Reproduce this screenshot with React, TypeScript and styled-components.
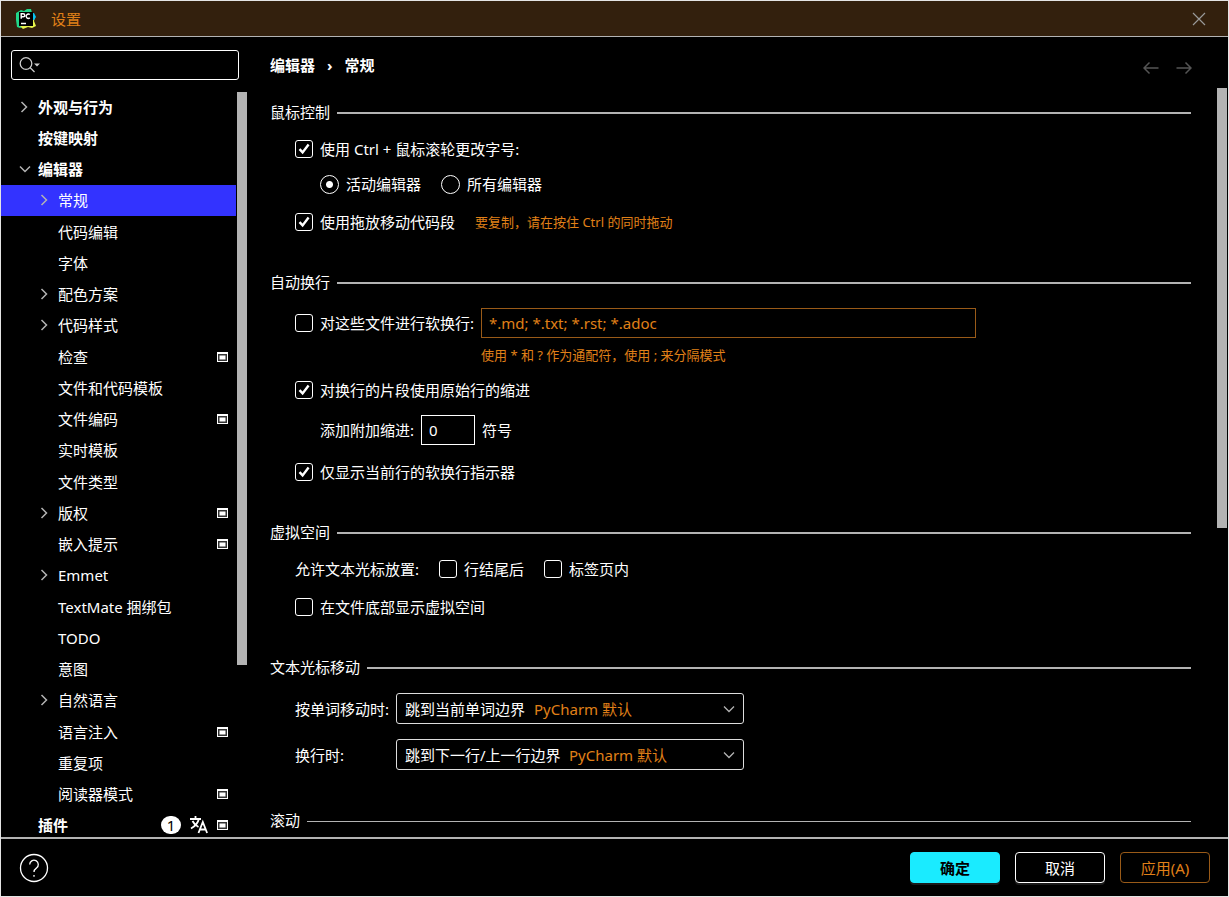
import React from "react";
import styled, { createGlobalStyle, css } from "styled-components";

const LINE = "#b3b3b3";
const ORANGE = "#e08018";

const Global = createGlobalStyle`
  *, *::before, *::after { box-sizing: border-box; }
  html, body, #root { height: 100%; }
  body {
    margin: 0;
    background: #000;
    color: #fff;
    font: 15px/20px "Noto Sans", "Noto Sans CJK SC", sans-serif;
  }
  button, input, select { font: inherit; color: inherit; }
`;

const Dialog = styled.div`
  height: 100vh;
  display: flex;
  flex-direction: column;
  border: 1px solid #e4e4e4;
  overflow: hidden;
`;

const TitleBar = styled.header`
  display: flex;
  align-items: center;
  gap: 14px;
  height: 36px;
  flex: none;
  padding: 0 19px 0 14px;
  background: #33200d;
  border-bottom: 1px solid ${LINE};
  color: ${ORANGE};
`;

const Title = styled.h1`
  margin: 0;
  flex: 1;
  font-size: 15px;
  font-weight: 400;
`;

const IconButton = styled.button<{ $tone?: string }>`
  display: flex;
  padding: 0;
  border: 0;
  background: none;
  color: ${(p) => p.$tone || "#999"};
`;

const Body = styled.div`
  flex: 1;
  min-height: 0;
  display: flex;
`;

const Sidebar = styled.aside`
  width: 247px;
  flex: none;
  display: flex;
  flex-direction: column;
`;

const SearchBox = styled.label`
  display: flex;
  align-items: center;
  gap: 4px;
  height: 30px;
  flex: none;
  margin: 13px 9px 11px 10px;
  padding: 0 7px;
  border: 1px solid #fff;
  border-radius: 3px;
`;

const SearchInput = styled.input`
  flex: 1;
  min-width: 0;
  border: 0;
  padding: 0;
  outline: 0;
  background: none;
`;

const TreeView = styled.nav`
  position: relative;
  flex: 1;
  min-height: 0;
  overflow: hidden;
`;

const TreeList = styled.ul`
  min-height: 750px;
  display: flex;
  flex-direction: column;
  justify-content: space-between;
  margin: 0;
  padding: 0;
  list-style: none;
`;

const TreeRow = styled.li<{ $level: number; $selected?: boolean }>`
  display: flex;
  align-items: center;
  height: 31px;
  padding: 0 20px 0 ${(p) => (p.$level ? 37 : 17)}px;
  font-weight: ${(p) => (p.$level ? 400 : 700)};
  background: ${(p) => (p.$selected ? "#3333ff" : "transparent")};
`;

const Twisty = styled.span`
  display: flex;
  width: 20px;
  flex: none;
`;

const RowLink = styled.a`
  flex: 1;
  color: inherit;
  text-decoration: none;
  white-space: nowrap;
`;

const RowIcons = styled.span`
  display: flex;
  align-items: center;
  gap: 9px;
`;

const Badge = styled.span`
  width: 20px;
  height: 18px;
  border-radius: 9px;
  background: #fff;
  color: #000;
  font-weight: 400;
  line-height: 18px;
  text-align: center;
`;

const Thumb = styled.div<{ $top?: number; $height: number }>`
  position: absolute;
  top: ${(p) => p.$top ?? 0}px;
  right: 0;
  width: 12px;
  height: ${(p) => p.$height}px;
  background: ${LINE};
  border: solid #000;
  border-width: 0 1px;
`;

const Main = styled.main`
  flex: 1;
  min-width: 0;
  display: flex;
  flex-direction: column;
`;

const MainHeader = styled.div`
  display: flex;
  align-items: center;
  height: 51px;
  flex: none;
  padding: 11px 36px 0 22px;
`;

const Crumbs = styled.div`
  flex: 1;
  display: flex;
  gap: 12px;
  padding-bottom: 6px;
  font-weight: 700;
`;

const NavButtons = styled.div`
  display: flex;
  gap: 17px;
`;

const ScrollArea = styled.div`
  position: relative;
  flex: 1;
  min-height: 0;
  overflow: hidden;
  padding: 14px 37px 0 22px;
`;

const Section = styled.section`
  margin-bottom: 40px;
`;

const SectionTitle = styled.h2<{ $thin?: boolean }>`
  display: flex;
  align-items: center;
  gap: 7px;
  margin: 0;
  font-size: 15px;
  font-weight: 400;
  &::after {
    content: "";
    flex: 1;
    height: ${(p) => (p.$thin ? 1 : 2)}px;
    margin-top: 2px;
    background: ${LINE};
  }
`;

const Row = styled.div<{ $top: number; $level?: number; $gap?: number }>`
  display: flex;
  align-items: center;
  gap: ${(p) => p.$gap ?? 7}px;
  margin-top: ${(p) => p.$top}px;
  padding-left: ${(p) => (p.$level ?? 1) * 25}px;
`;

const Check = styled.label`
  display: flex;
  align-items: center;
  gap: 7px;
  white-space: nowrap;
`;

const CheckInput = styled.input.attrs({ type: "checkbox" })`
  appearance: none;
  width: 18px;
  height: 18px;
  margin: 0;
  border: 1px solid #fff;
  border-radius: 3px;
  &:checked {
    background: url("data:image/svg+xml,%3Csvg xmlns='http://www.w3.org/2000/svg' viewBox='0 0 16 16'%3E%3Cpath d='M3.500 8.200 6.600 11.400 12.600 3.600' fill='none' stroke='white' stroke-width='2.400'/%3E%3C/svg%3E") center / 16px 16px no-repeat;
  }
`;

const RadioInput = styled.input.attrs({ type: "radio" })`
  appearance: none;
  width: 19px;
  height: 19px;
  margin: 0;
  border: 1px solid #fff;
  border-radius: 50%;
  &:checked {
    background: radial-gradient(circle, #fff 0 3px, transparent 4px);
  }
`;

const Hint = styled.span`
  color: ${ORANGE};
  font-size: 13px;
`;

const IndentedHint = styled(Hint)`
  display: block;
  margin: 7px 0 0 211px;
`;

const TextInput = styled.input<{ $muted?: boolean }>`
  width: ${(p) => (p.$muted ? 495 : 54)}px;
  height: 30px;
  padding: 0 7px;
  border: 1px solid ${(p) => (p.$muted ? "#995a18" : "#fff")};
  border-radius: 0;
  background: #000;
  color: ${(p) => (p.$muted ? ORANGE : "#fff")};
`;

const FieldLabel = styled.label<{ $width?: number }>`
  width: ${(p) => (p.$width ? p.$width + "px" : "auto")};
  white-space: nowrap;
`;

const SelectBox = styled.span`
  display: flex;
  align-items: center;
  gap: 8px;
  width: 348px;
  height: 31px;
  padding: 0 7px 0 8px;
  border: 1px solid #ddd;
  border-radius: 3px;
  white-space: nowrap;
  svg { margin-left: auto; }
`;

const Select = styled.select`
  appearance: none;
  height: 29px;
  border: 0;
  padding: 0;
  outline: 0;
  background: #000;
`;

const SelectNote = styled.span`
  color: ${ORANGE};
`;

const Footer = styled.footer`
  display: flex;
  align-items: center;
  gap: 15px;
  height: 59px;
  flex: none;
  padding: 0 18px;
  border-top: 2px solid ${LINE};
`;

const HelpButton = styled.button`
  display: flex;
  margin-right: auto;
  padding: 0;
  border: 0;
  background: none;
`;

const Button = styled.button<{ $kind: "primary" | "normal" | "muted" }>`
  width: 90px;
  height: 31px;
  padding: 0;
  border-radius: 4px;
  border: 1px solid #fff;
  background: #000;
  color: #fff;
  box-shadow: 0 2px 0 #1a1a1a;
  ${(p) => p.$kind === "primary" && css`background: #1aebff; border-color: #1aebff; color: #000; font-weight: 700;`}
  ${(p) => p.$kind === "muted" && css`border-color: #995a18; color: ${ORANGE}; box-shadow: none;`}
`;

const Logo = () => (
  <svg width="22" height="22" viewBox="0 0 22 22">
    <path d="M1 5 6 2 9 3 12 1 16 1 17 5 12 14 8 19 5 20 2 19 1 12Z" fill="#21d789" />
    <path d="M16 6 20 9 19 13 21 18 17 20 13 19 8 21 5 18 14 14Z" fill="#e8f44a" />
    <path d="M16 5 19 5 21 9 19 12 17 12Z" fill="#07c3f2" />
    <rect x="4" y="4" width="14" height="14" fill="#000" />
    <path d="M6.200 10.800V5.700H8.200A1.500 1.500 0 0 1 8.200 8.800H6.200M14.800 6.500A2.200 2.200 0 1 0 14.800 9.900M6 15.500H11" fill="none" stroke="#fff" strokeWidth="1.400" />
  </svg>
);

const Chevron = ({ open }: { open?: boolean }) => (
  <svg width="14" height="14" viewBox="0 0 14 14" fill="none" stroke="#b3b3b3" strokeWidth="1.500">
    <path d={open ? "M2 4.500 7 9.500 12 4.500" : "M3.500 2 8.500 7 3.500 12"} />
  </svg>
);

const ProjectIcon = () => (
  <svg width="11" height="10" viewBox="0 0 11 10">
    <rect width="11" height="10" fill="#fff" />
    <rect x="1" y="2" width="9" height="7" fill="#333" />
    <rect x="2.500" y="3.500" width="6" height="4" fill="#fff" />
  </svg>
);

const TranslateIcon = () => (
  <svg width="18" height="18" viewBox="0 0 18 18" fill="none" stroke="#fff" strokeWidth="1.800">
    <path d="M0 3H11M5.500 0V3M8.800 3C8 7 4.500 10.500 1 12.500M2.500 5C4 8 6.500 10 8.500 11M8.500 17 12.800 6 17.100 17M10 13.500H15.600" />
  </svg>
);

type Item = { name: string; level: number; open?: boolean; arrow?: boolean; icon?: boolean; selected?: boolean; plugin?: boolean };

const items: Item[] = [
  { name: "外观与行为", level: 0, arrow: true },
  { name: "按键映射", level: 0 },
  { name: "编辑器", level: 0, arrow: true, open: true },
  { name: "常规", level: 1, arrow: true, selected: true },
  { name: "代码编辑", level: 1 },
  { name: "字体", level: 1 },
  { name: "配色方案", level: 1, arrow: true },
  { name: "代码样式", level: 1, arrow: true },
  { name: "检查", level: 1, icon: true },
  { name: "文件和代码模板", level: 1 },
  { name: "文件编码", level: 1, icon: true },
  { name: "实时模板", level: 1 },
  { name: "文件类型", level: 1 },
  { name: "版权", level: 1, arrow: true, icon: true },
  { name: "嵌入提示", level: 1, icon: true },
  { name: "Emmet", level: 1, arrow: true },
  { name: "TextMate 捆绑包", level: 1 },
  { name: "TODO", level: 1 },
  { name: "意图", level: 1 },
  { name: "自然语言", level: 1, arrow: true },
  { name: "语言注入", level: 1, icon: true },
  { name: "重复项", level: 1 },
  { name: "阅读器模式", level: 1, icon: true },
  { name: "插件", level: 0, icon: true, plugin: true },
];

const Checkbox = ({ label, checked }: { label: string; checked?: boolean }) => (
  <Check>
    <CheckInput defaultChecked={checked} />
    {label}
  </Check>
);

const Dropdown = ({ id, value }: { id: string; value: string }) => (
  <SelectBox>
    <Select id={id}>
      <option>{value}</option>
    </Select>
    <SelectNote>PyCharm 默认</SelectNote>
    <svg width="14" height="14" viewBox="0 0 14 14" fill="none" stroke="#b3b3b3" strokeWidth="1.300">
      <path d="M2 4.500 7 9.500 12 4.500" />
    </svg>
  </SelectBox>
);

export default function App() {
  return (
    <>
      <Global />
      <Dialog>
        <TitleBar>
          <Logo />
          <Title>设置</Title>
          <IconButton aria-label="关闭">
            <svg width="20" height="20" viewBox="0 0 20 20" fill="none" stroke="currentColor" strokeWidth="1.200">
              <path d="M4 4 16 16M16 4 4 16" />
            </svg>
          </IconButton>
        </TitleBar>
        <Body>
          <Sidebar>
            <SearchBox>
              <svg width="22" height="18" viewBox="0 0 22 18" fill="none" stroke="#ccc" strokeWidth="1.300">
                <circle cx="7" cy="7.500" r="5.800" />
                <path d="M11 11.500 15.500 16" />
                <path d="M15 7.500H21L18 10.500Z" fill="#ccc" stroke="none" />
              </svg>
              <SearchInput type="text" aria-label="搜索" />
            </SearchBox>
            <TreeView>
              <TreeList>
                {items.map((it) => (
                  <TreeRow key={it.name} $level={it.level} $selected={it.selected}>
                    <Twisty>{it.arrow && <Chevron open={it.open} />}</Twisty>
                    <RowLink href="#">{it.name}</RowLink>
                    <RowIcons>
                      {it.plugin && <Badge>1</Badge>}
                      {it.plugin && <TranslateIcon />}
                      {it.icon && <ProjectIcon />}
                    </RowIcons>
                  </TreeRow>
                ))}
              </TreeList>
              <Thumb $top={1} $height={573} />
            </TreeView>
          </Sidebar>
          <Main>
            <MainHeader>
              <Crumbs>
                <span>编辑器</span>
                <span>›</span>
                <span>常规</span>
              </Crumbs>
              <NavButtons>
                <IconButton $tone="#555" aria-label="后退">
                  <svg width="16" height="16" viewBox="0 0 16 16" fill="none" stroke="currentColor" strokeWidth="1.500">
                    <path d="M15.500 8H1M6.500 2.500 1 8 6.500 13.500" />
                  </svg>
                </IconButton>
                <IconButton $tone="#555" aria-label="前进">
                  <svg width="16" height="16" viewBox="0 0 16 16" fill="none" stroke="currentColor" strokeWidth="1.500">
                    <path d="M.5 8H15M9.500 2.500 15 8 9.500 13.500" />
                  </svg>
                </IconButton>
              </NavButtons>
            </MainHeader>
            <ScrollArea>
              <Section>
                <SectionTitle>鼠标控制</SectionTitle>
                <Row $top={17}>
                  <Checkbox label="使用 Ctrl + 鼠标滚轮更改字号:" checked />
                </Row>
                <Row $top={15} $level={2} $gap={20}>
                  <Check><RadioInput name="scope" defaultChecked />活动编辑器</Check>
                  <Check><RadioInput name="scope" />所有编辑器</Check>
                </Row>
                <Row $top={18} $gap={20}>
                  <Checkbox label="使用拖放移动代码段" checked />
                  <Hint>要复制，请在按住 Ctrl 的同时拖动</Hint>
                </Row>
              </Section>
              <Section>
                <SectionTitle>自动换行</SectionTitle>
                <Row $top={16}>
                  <Checkbox label="对这些文件进行软换行:" />
                  <TextInput $muted aria-label="文件模式" defaultValue="*.md; *.txt; *.rst; *.adoc" />
                </Row>
                <IndentedHint>使用 * 和 ? 作为通配符，使用 ; 来分隔模式</IndentedHint>
                <Row $top={15}>
                  <Checkbox label="对换行的片段使用原始行的缩进" checked />
                </Row>
                <Row $top={15} $level={2}>
                  <FieldLabel htmlFor="indent">添加附加缩进:</FieldLabel>
                  <TextInput id="indent" defaultValue="0" />
                  <span>符号</span>
                </Row>
                <Row $top={17}>
                  <Checkbox label="仅显示当前行的软换行指示器" checked />
                </Row>
              </Section>
              <Section>
                <SectionTitle>虚拟空间</SectionTitle>
                <Row $top={17} $gap={20}>
                  <span>允许文本光标放置:</span>
                  <Checkbox label="行结尾后" />
                  <Checkbox label="标签页内" />
                </Row>
                <Row $top={18}>
                  <Checkbox label="在文件底部显示虚拟空间" />
                </Row>
              </Section>
              <Section>
                <SectionTitle>文本光标移动</SectionTitle>
                <Row $top={16}>
                  <FieldLabel htmlFor="word" $width={94}>按单词移动时:</FieldLabel>
                  <Dropdown id="word" value="跳到当前单词边界" />
                </Row>
                <Row $top={15}>
                  <FieldLabel htmlFor="wrap" $width={94}>换行时:</FieldLabel>
                  <Dropdown id="wrap" value="跳到下一行/上一行边界" />
                </Row>
              </Section>
              <Section>
                <SectionTitle $thin>滚动</SectionTitle>
              </Section>
              <Thumb $height={440} />
            </ScrollArea>
          </Main>
        </Body>
        <Footer>
          <HelpButton aria-label="帮助">
            <svg width="30" height="30" viewBox="0 0 30 30" fill="none" stroke="#fff" strokeWidth="1.300">
              <circle cx="15" cy="15" r="13.500" />
              <path d="M10.700 11.500A4.300 4.300 0 1 1 17.500 15C15.800 16.200 15 16.700 15 19M15 22V23.800" />
            </svg>
          </HelpButton>
          <Button $kind="primary">确定</Button>
          <Button $kind="normal">取消</Button>
          <Button $kind="muted">应用(A)</Button>
        </Footer>
      </Dialog>
    </>
  );
}
